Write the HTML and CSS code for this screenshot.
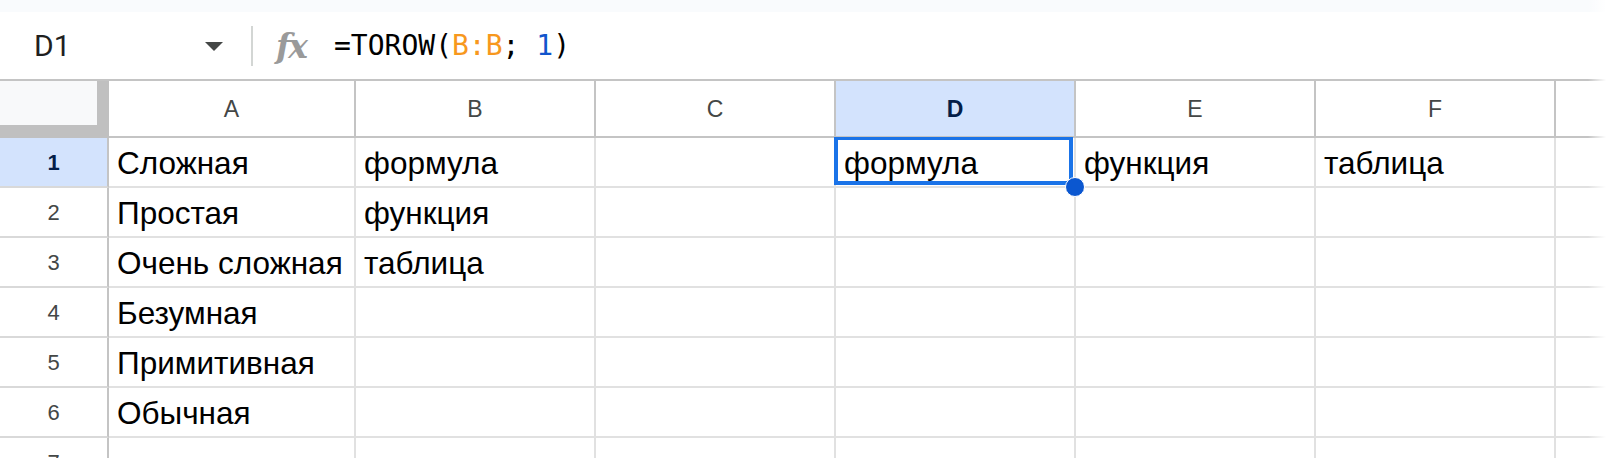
FILE: index.html
```html
<!DOCTYPE html>
<html lang="ru">
<head>
<meta charset="utf-8">
<title>Sheet</title>
<link rel="stylesheet" href="styles.css">
</head>
<body>
<div class="app">
  <div class="topband"></div>
  <div class="fbar">
    <div class="namebox">
      <span class="ref">D1</span>
      <span class="caret"></span>
    </div>
    <div class="sep"></div>
    <div class="fx">fx</div>
    <div class="formula">=TOROW(<span class="rng">B:B</span>; <span class="num">1</span>)</div>
  </div>
  <div class="sheet">
    <div class="corner"></div>
    <div class="ch">A</div>
    <div class="ch">B</div>
    <div class="ch">C</div>
    <div class="ch sel">D</div>
    <div class="ch">E</div>
    <div class="ch">F</div>
    <div class="ch last"></div>

    <div class="rh sel">1</div>
    <div class="c">Сложная</div>
    <div class="c">формула</div>
    <div class="c"></div>
    <div class="c active">формула<span class="handle"></span></div>
    <div class="c">функция</div>
    <div class="c">таблица</div>
    <div class="c"></div>

    <div class="rh">2</div>
    <div class="c">Простая</div>
    <div class="c">функция</div>
    <div class="c"></div><div class="c"></div><div class="c"></div><div class="c"></div><div class="c"></div>

    <div class="rh">3</div>
    <div class="c">Очень сложная</div>
    <div class="c">таблица</div>
    <div class="c"></div><div class="c"></div><div class="c"></div><div class="c"></div><div class="c"></div>

    <div class="rh">4</div>
    <div class="c">Безумная</div>
    <div class="c"></div><div class="c"></div><div class="c"></div><div class="c"></div><div class="c"></div><div class="c"></div>

    <div class="rh">5</div>
    <div class="c">Примитивная</div>
    <div class="c"></div><div class="c"></div><div class="c"></div><div class="c"></div><div class="c"></div><div class="c"></div>

    <div class="rh">6</div>
    <div class="c">Обычная</div>
    <div class="c"></div><div class="c"></div><div class="c"></div><div class="c"></div><div class="c"></div><div class="c"></div>

    <div class="rh">7</div>
    <div class="c"></div><div class="c"></div><div class="c"></div><div class="c"></div><div class="c"></div><div class="c"></div><div class="c"></div>
  </div>
  <div class="fade"></div>
</div>
</body>
</html>
```
FILE: styles.css
```css
* { box-sizing: border-box; }
html, body {
  margin: 0;
  padding: 0;
  background: #fff;
}
body {
  width: 1606px;
  height: 458px;
  overflow: hidden;
  font-family: "Liberation Sans", Arial, sans-serif;
}
.app {
  position: relative;
  width: 1606px;
  height: 458px;
  overflow: hidden;
}
.topband {
  height: 12px;
  background: #f9fbfd;
}
.fbar {
  height: 69px;
  display: flex;
  align-items: center;
  border-bottom: 2px solid #c4c4c4;
  background: #fff;
}
.namebox {
  width: 251px;
  padding-left: 34px;
  padding-right: 28px;
  display: flex;
  align-items: center;
  justify-content: space-between;
}
.ref {
  font-family: Roboto, "Liberation Sans", sans-serif;
  font-size: 30px;
  color: #1f1f1f;
  line-height: 1;
}
.caret {
  width: 0;
  height: 0;
  border-left: 9px solid transparent;
  border-right: 9px solid transparent;
  border-top: 9px solid #444746;
  margin-top: 2px;
}
.sep {
  width: 2px;
  height: 40px;
  background: #d3d6d4;
}
.fx {
  margin-left: 23px;
  width: 36px;
  font-family: "DejaVu Serif", "Liberation Serif", serif;
  font-style: italic;
  font-weight: bold;
  font-size: 33px;
  color: #9a9a9a;
  line-height: 1;
  letter-spacing: -2px;
  margin-top: 2px;
}
.formula {
  margin-left: 22px;
  font-family: "DejaVu Sans Mono", "Liberation Mono", monospace;
  font-size: 28px;
  color: #000;
  line-height: 1;
  white-space: pre;
}
.rng { color: #f7981d; }
.num { color: #1155cc; }

.sheet {
  display: grid;
  grid-template-columns: 109px 247px 240px 240px 240px 240px 240px 50px;
  grid-template-rows: 57px;
  grid-auto-rows: 50px;
}
.corner {
  background: #f8f9fa;
  border-right: 12px solid #c0c0c0;
  border-bottom: 13px solid #c0c0c0;
}
.ch {
  border-right: 2px solid #c4c4c4;
  border-bottom: 2px solid #c4c4c4;
  display: flex;
  align-items: center;
  justify-content: center;
  font-size: 23px;
  color: #444746;
  padding-top: 1px;
}
.ch.last { border-right: none; }
.ch.sel, .rh.sel {
  background: #d3e3fd;
  color: #041e49;
  font-weight: bold;
}
.rh {
  border-right: 2px solid #c4c4c4;
  border-bottom: 2px solid #d9d9d9;
  display: flex;
  align-items: center;
  justify-content: center;
  font-size: 22px;
  color: #444746;
  padding-top: 2px;
}
.c {
  position: relative;
  border-right: 2px solid #e1e1e1;
  border-bottom: 2px solid #e1e1e1;
  display: flex;
  align-items: flex-end;
  padding: 0 8px 7px;
  font-size: 31.5px;
  line-height: 1;
  color: #000;
  white-space: nowrap;
}
.c:nth-child(8n) { border-right: none; }
.c.active::after {
  content: "";
  position: absolute;
  left: -2px;
  top: -1px;
  right: 1px;
  bottom: 1px;
  border: 4px solid #1a73e8;
  border-top-width: 3px;
}
.handle {
  position: absolute;
  left: 229px;
  top: 39px;
  width: 20px;
  height: 20px;
  border-radius: 50%;
  background: #0b57d0;
  border: 1px solid #fff;
  z-index: 2;
}
.fade {
  position: absolute;
  top: 0;
  right: 0;
  width: 18px;
  height: 458px;
  background: linear-gradient(to right, rgba(255,255,255,0), #fff);
  z-index: 5;
}
```
